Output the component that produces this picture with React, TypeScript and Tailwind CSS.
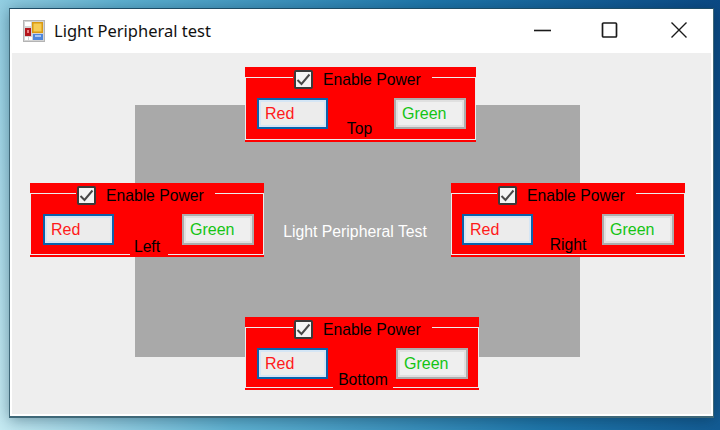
import type { ReactNode } from 'react';

function AppIcon() {
  return (
    <svg width="22" height="22" viewBox="0 0 22 22" className="mb-[1px] shrink-0">
      <rect x="0.5" y="0.5" width="21" height="21" fill="#d4d4d4" stroke="#b4b4b4" />
      <rect x="2" y="2" width="6" height="4" fill="#fff" />
      <rect x="9" y="2" width="11" height="11" fill="#d99a12" />
      <rect x="10.5" y="3.5" width="8" height="8" fill="#f6cc55" />
      <rect x="2" y="8" width="6" height="8" fill="#b3151b" />
      <rect x="4" y="10" width="2" height="3" fill="#ee8080" />
      <rect x="2" y="17" width="3" height="3" fill="#fff" />
      <rect x="6" y="17" width="3" height="3" fill="#fff" />
      <rect x="10" y="14" width="10" height="6" fill="#4f86dc" />
      <rect x="12" y="15" width="6" height="2" fill="#a9c6f2" />
    </svg>
  );
}

function CaptionButtons() {
  return (
    <div className="mb-[2px] flex items-center">
      <svg width="18" height="18" viewBox="0 0 18 18" className="mr-[49px]">
        <path d="M0 9.5h17" stroke="#1a1a1a" strokeWidth="1.6" />
      </svg>
      <svg width="18" height="18" viewBox="0 0 18 18" className="mr-[51px]">
        <rect x="1.5" y="2" width="14" height="14" rx="1" fill="none" stroke="#1a1a1a" strokeWidth="1.7" />
      </svg>
      <svg width="18" height="18" viewBox="0 0 18 18">
        <path d="M1.5 1.5l15 15M16.5 1.5l-15 15" stroke="#1a1a1a" strokeWidth="1.4" />
      </svg>
    </div>
  );
}

function Checkbox() {
  return (
    <span className="flex h-[19px] w-[19px] shrink-0 items-center justify-center rounded-[2px] border-2 border-[#3a3a3a] bg-[#f4f4f4]">
      <svg width="15" height="15" viewBox="0 0 15 15">
        <path d="M1.5 8l4 4L13.5 2.5" fill="none" stroke="#484848" strokeWidth="2" />
      </svg>
    </span>
  );
}

interface GroupProps {
  title: string;
  className: string;
  legendClass: string;
  redClass: string;
  greenClass: string;
  // labels that sit on the bottom line cut a gap in it, the others sit above it
  labelClass: string;
}

function PowerGroup({ title, className, legendClass, redClass, greenClass, labelClass }: GroupProps) {
  return (
    <section className={`absolute bg-[#ff0000] ${className}`}>
      <div className="absolute inset-x-0 top-[10px] bottom-[2px] border border-[#ececec]" />
      <div className={`relative flex h-[22px] w-[139px] items-center gap-[10px] bg-[#ff0000] pl-[1px] pt-[3px] ${legendClass}`}>
        <Checkbox />
        <span className="text-[15.7px] text-black">Enable Power</span>
      </div>
      <div className="relative mt-[9px] flex items-start justify-between">
        <button className={`flex h-[31px] w-[71px] items-center border-2 border-[#0b62ab] bg-[#ececec] pl-[6px] text-[16px] text-[#ff1a1a] shadow-[inset_0_0_0_2px_#d5e6f5] ${redClass}`}>
          Red
        </button>
        <button className={`flex h-[31px] w-[72px] items-center border-2 border-[#adadad] bg-[#efefef] pl-[6px] text-[16px] text-[#14c414] shadow-[inset_0_0_0_2px_#e0e0e0] ${greenClass}`}>
          Green
        </button>
      </div>
      <span className={`absolute text-center text-[15.7px] leading-[18px] text-black ${labelClass}`}>{title}</span>
    </section>
  );
}

function Window({ children }: { children: ReactNode }) {
  return (
    <div className="ml-[9px] mt-[8px] flex h-[410px] w-[705px] flex-col border border-b-2 border-[#3f6878] border-t-[#1d4c66] bg-white shadow-[0_2px_14px_rgba(0,30,50,0.4)]">
      <header className="flex h-[44px] shrink-0 items-center bg-white pl-[13px] pr-[25px]">
        <AppIcon />
        <h1 className="ml-[9px] flex-1 font-['Noto_Sans',sans-serif] text-[16.5px] font-normal text-[#111]">Light Peripheral test</h1>
        <CaptionButtons />
      </header>
      {children}
    </div>
  );
}

export default function App() {
  return (
    <div className="h-[430px] w-[720px] overflow-hidden bg-[linear-gradient(75deg,#c5eaf2_0%,#5fb2d2_28%,#1f77ab_65%,#0b4a85_100%)] font-['Liberation_Sans',sans-serif]">
      <Window>
        <main className="relative mx-[2px] mb-[2px] flex-1 bg-[#eeeeee]">
          <div className="absolute left-[123px] top-[52px] flex h-[252px] w-[445px] items-center justify-center bg-[#a9a9a9] pr-[5px] pt-[2px]">
            <span className="text-[15.8px] text-white">Light Peripheral Test</span>
          </div>
          <PowerGroup title="Top" className="left-[233px] top-[14px] h-[75px] w-[231px]" legendClass="ml-[48px]" redClass="ml-[12px]" greenClass="mr-[10px]" labelClass="left-[100px] top-[53px] h-[18px] w-[29px]" />
          <PowerGroup title="Left" className="left-[18px] top-[130px] h-[74px] w-[234px]" legendClass="ml-[46px]" redClass="ml-[13px]" greenClass="mr-[10px]" labelClass="left-[100px] top-[54px] h-[19px] w-[38px] bg-[#ff0000] pr-[4px] pt-[1px]" />
          <PowerGroup title="Right" className="left-[439px] top-[130px] h-[74px] w-[234px]" legendClass="ml-[46px]" redClass="ml-[11px]" greenClass="mr-[11px]" labelClass="left-[97px] top-[53px] w-[40px]" />
          <PowerGroup title="Bottom" className="left-[233px] top-[264px] h-[73px] w-[234px]" legendClass="ml-[48px]" redClass="ml-[12px]" greenClass="mr-[11px]" labelClass="left-[88px] top-[53px] h-[19px] w-[60px] bg-[#ff0000] pt-[1px]" />
        </main>
      </Window>
    </div>
  );
}
